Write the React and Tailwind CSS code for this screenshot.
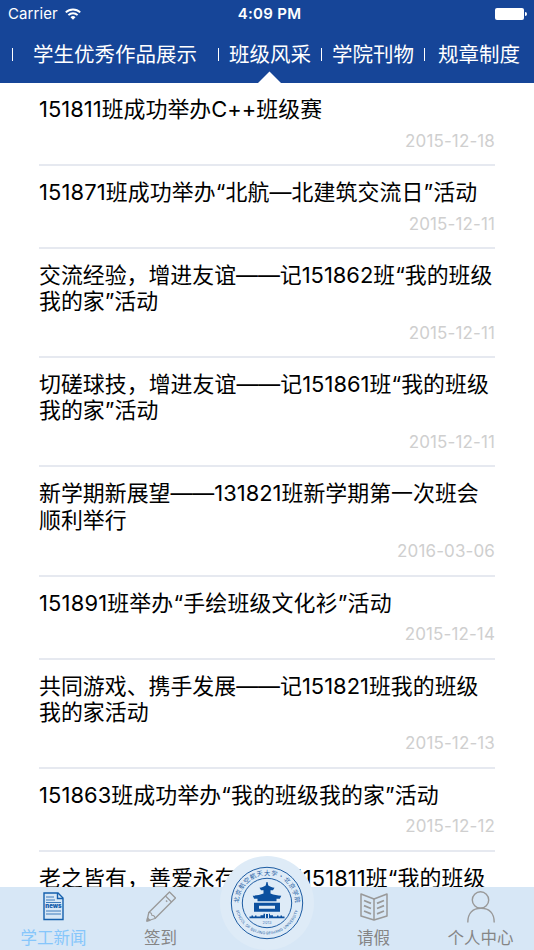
import React from 'react';
import clsx from 'clsx';

const tabs = [
  { label: '学生优秀作品展示', className: 'ml-[20px] w-[185px]' },
  { label: '班级风采', className: 'ml-[10px] w-[92px]', active: true },
  { label: '学院刊物', className: 'ml-[10px] w-[92px]' },
  { label: '规章制度', className: 'ml-[13px] w-[90px]' },
];

const news = [
  { lines: ['151811班成功举办C++班级赛'], date: '2015-12-18', tracking: 'tracking-[0.03px]' },
  { lines: ['151871班成功举办“北航—北建筑交流日”活动'], date: '2015-12-11', tracking: 'tracking-[0.12px]' },
  { lines: ['交流经验，增进友谊——记151862班“我的班级', '我的家”活动'], date: '2015-12-11', tracking: 'tracking-normal' },
  { lines: ['切磋球技，增进友谊——记151861班“我的班级', '我的家”活动'], date: '2015-12-11', tracking: 'tracking-[0.04px]' },
  { lines: ['新学期新展望——131821班新学期第一次班会', '顺利举行'], date: '2016-03-06', tracking: 'tracking-[0.02px]' },
  { lines: ['151891班举办“手绘班级文化衫”活动'], date: '2015-12-14', tracking: 'tracking-[0.18px]' },
  { lines: ['共同游戏、携手发展——记151821班我的班级', '我的家活动'], date: '2015-12-13', tracking: 'tracking-[0.02px]' },
  { lines: ['151863班成功举办“我的班级我的家”活动'], date: '2015-12-12', tracking: 'tracking-[0.1px]' },
  { lines: ['老之皆有，善爱永存——记151811班“我的班级'], tracking: 'tracking-[0.09px]' },
];

const NewsIcon = () => (
  <svg width="22" height="29" viewBox="0 0 22 29" fill="none" stroke="#1560ad" strokeWidth="1.4">
    <path d="M1 1h14l5 5v21.500H1z" />
    <path d="M14.500 1v5.500H20" />
    <path d="M3 5h8M3 8h9M3 10.500h15M3 19h15M3 22h15" strokeWidth="0.8" />
    <text x="10.500" y="16.300" textAnchor="middle" fontSize="6" fontWeight="900" fill="#1560ad" stroke="none" fontFamily="Inter, sans-serif">
      news
    </text>
  </svg>
);

const PencilIcon = () => (
  <svg width="30" height="31" viewBox="0 0 30 31" fill="none" stroke="#999" strokeWidth="1.300" strokeLinejoin="round">
    <path d="M1 30l1.800-8.500L23.500 1l6 6L9 27.500z" />
    <path d="M2.800 21.500c2-.3 3 .8 3 2.800 2 0 3.200 1.200 3.200 3.200M19.500 5l6 6" strokeWidth="1.100" />
    <path d="M1 30l.6-3 2.400 2.400z" fill="#999" />
    <path d="M20 9.500l1.200 1.200" />
  </svg>
);

const BookIcon = () => (
  <svg width="28" height="28" viewBox="0 0 28 28" fill="none" stroke="#999" strokeWidth="1.500">
    <path d="M1 1l13 5 13-5v22l-13 4-13-4z" strokeLinejoin="round" />
    <path d="M14 6v21" />
    <path d="M4 7.500l7 2.800M4 12.700l7 2.800M4 18l7 2.800M24 7.500l-7 2.800M24 12.700l-7 2.800M24 18l-7 2.800" strokeWidth="1.800" />
  </svg>
);

const UserIcon = () => (
  <svg width="28" height="32" viewBox="0 0 28 32" fill="none" stroke="#999" strokeWidth="1.400">
    <circle cx="13.500" cy="9" r="8.200" />
    <path d="M.8 31.500C.8 22 6 17.300 14 17.300S27.200 22 27.200 31.500" />
  </svg>
);

const Emblem = () => (
  <svg width="94" height="94" viewBox="0 0 94 94" className="block">
    <defs>
      <path id="arc-top" d="M19.500 54A28.300 28.300 0 1 1 74.500 54" />
      <path id="arc-bottom" d="M15.500 52A32 32 0 0 0 78.500 52" />
    </defs>
    <circle cx="47" cy="47" r="47" fill="#deebf7" />
    <circle cx="47" cy="47" r="35.700" fill="none" stroke="#1c5ba2" strokeWidth="1" />
    <circle cx="47" cy="47" r="24.700" fill="none" stroke="#1c5ba2" strokeWidth="1" />
    <text fontSize="6.200" fill="#1c5ba2" fontFamily="'Noto Sans CJK SC', sans-serif">
      <textPath href="#arc-top" startOffset="50%" textAnchor="middle" textLength="88">
        北京航空航天大学·北京学院
      </textPath>
    </text>
    <text fontSize="3.700" fill="#1c5ba2" fontFamily="Inter, sans-serif">
      <textPath href="#arc-bottom" startOffset="50%" textAnchor="middle" textLength="84">
        SCHOOL OF BEIJING·BEIHANG UNIVERSITY
      </textPath>
    </text>
    <g fill="#0b509f">
      <path d="M46.500 26h1l.8 3.500c1.700 1.300 4 2 6.200 2.200l-1.500 2.600h-2.500v3.200c3.500 1.500 7 2 10.800 2.200l-1.500 3h-3.300v2.500h-19v-2.500h-3.300l-1.500-3c3.800-.2 7.300-.7 10.800-2.200v-3.200H41l-1.500-2.600c2.200-.2 4.500-.9 6.200-2.200z" />
      <path fillRule="evenodd" d="M34 46.800h26v9H34zm5 2.900v3h16v-3z" />
      <path d="M29.500 60.500h2v-1h1.500v1h2v-1h1.500v1h4v-1.200h3v-1.600h1.500V62h1v-4h2v4h1v-4.300H50v1.600h3v1.200h4v-1h1.500v1h2v-1H62v1h2.500v1.700h-35z" />
    </g>
    <text x="47" y="67.800" textAnchor="middle" fontSize="4" fill="#4b80ba" fontFamily="Inter, sans-serif">
      2013
    </text>
  </svg>
);

const StatusBar = () => (
  <div className="grid h-[27px] grid-cols-3 items-center pl-2 pr-[7px]">
    <div className="flex items-center gap-[7px] pt-px text-[15px] tracking-[0.1px]">
      Carrier
      <svg width="16" height="12" viewBox="0 0 16 12" fill="none" stroke="white" strokeWidth="1.900">
        <path d="M.8 4.400a10.300 10.300 0 0 1 14.400 0M3.400 7.200a6.500 6.500 0 0 1 9.200 0" />
        <path d="M8 11.800L5.500 9.200a3.600 3.600 0 0 1 5 0z" fill="white" stroke="none" />
      </svg>
    </div>
    <div className="pl-1 pt-[2px] text-center text-[15px] font-semibold tracking-[0.3px]">4:09 PM</div>
    <div className="flex items-center justify-end gap-px">
      <span className="h-[12px] w-[29px] rounded-[2px] bg-white" />
      <span className="h-1 w-[2px] rounded-r-full bg-white" />
    </div>
  </div>
);

const NewsItem = ({ item }) => (
  <li className="border-b-2 border-[#e6e9f0] pt-[13px]">
    <h2 className={clsx('text-[21.900px] leading-[26.080px] text-black', item.tracking)}>
      {item.lines.map((line) => (
        <span key={line} className="block whitespace-nowrap">{line}</span>
      ))}
    </h2>
    {item.date && (
      <p className="mt-[7.500px] h-[34.500px] text-right text-[17px] leading-[22px] tracking-[0.12px] text-[#cfcfcf]">
        {item.date}
      </p>
    )}
  </li>
);

const NavItem = ({ icon, label, active, className }) => (
  <a className={clsx('flex flex-col items-center', className, active ? 'text-[#86c6fb]' : 'text-[#858585]')}>
    <span className="flex h-[39px] shrink-0 items-center">{icon}</span>
    <span className="whitespace-nowrap text-[16.500px] leading-[25px]">{label}</span>
  </a>
);

const App = () => {
  return (
    <div className="flex h-[950px] w-[534px] flex-col overflow-hidden bg-white font-['Inter','Noto_Sans_CJK_SC',sans-serif]">
      <header className="h-[83px] shrink-0 bg-[#164598] text-white">
        <StatusBar />
        <nav className="flex h-14 pl-3">
          {tabs.map((tab) => (
            <div key={tab.label} className="flex">
              <span className="mt-[21px] h-[13px] w-px bg-white" />
              <span className={clsx('relative whitespace-nowrap text-[20.500px] leading-[56px]', tab.className)}>
                {tab.label}
                {tab.active && (
                  <svg className="absolute bottom-0 left-[28px]" width="24" height="12" viewBox="0 0 24 12">
                    <path d="M1 12L12.500 .5 24 12z" fill="white" />
                  </svg>
                )}
              </span>
            </div>
          ))}
        </nav>
      </header>

      <ul className="min-h-0 flex-1 overflow-hidden px-[39px]">
        {news.map((item) => (
          <NewsItem key={item.lines[0]} item={item} />
        ))}
      </ul>

      <footer className="relative flex h-[63px] shrink-0 bg-[#d7e7f6]">
        <NavItem className="w-[107px]" icon={<NewsIcon />} label="学工新闻" active />
        <NavItem className="w-[107px]" icon={<PencilIcon />} label="签到" />
        <div className="w-[106px]" />
        <NavItem className="w-[107px]" icon={<BookIcon />} label="请假" />
        <NavItem className="w-[107px]" icon={<UserIcon />} label="个人中心" />
        <div className="absolute -top-[31px] left-[220px]">
          <Emblem />
        </div>
      </footer>
    </div>
  );
};

export default App;
